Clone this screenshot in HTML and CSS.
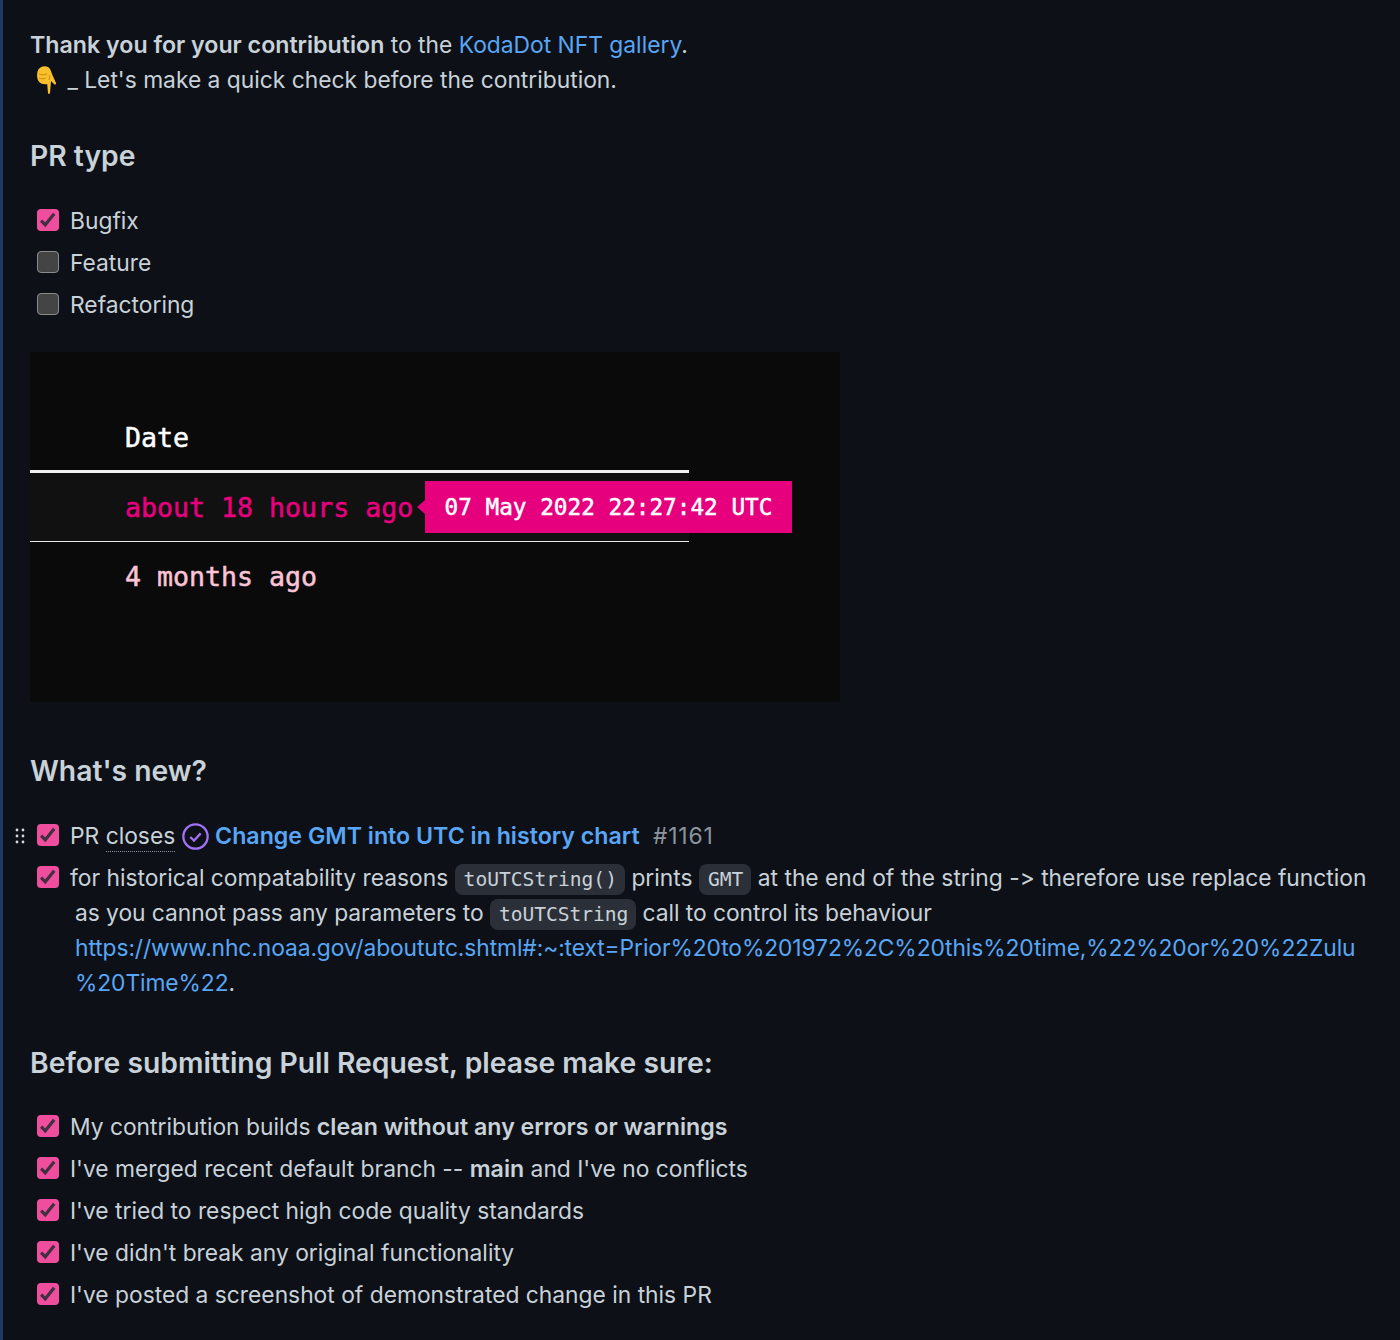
FILE: index.html
```html
<!DOCTYPE html>
<html lang="en">
<head>
  <meta charset="UTF-8" />
  <title>Pull request description</title>
  <link rel="stylesheet" href="styles.css">
</head>
<body>
  <div id="comment">
    <p class="intro"><b>Thank you for your contribution</b> to the <a href="#">KodaDot NFT gallery</a>.<br>
      <svg class="emoji" viewBox="0 0 24 30" width="24" height="30">
        <path d="M3 5c2-3 6-5 10-3 2 1 3 4 4 7l4 9c.5 1.5-1 2-2 1l-3-3-1 12c-.2 1.2-1.8 1.2-2 0l-.8-9c-3 .5-6 0-8-2-2-2-3-8-1-12z" fill="#f9c02c"/>
        <path d="M4 9c2 1 5 1 8 0M4 13c2 1 5 1 7 0M14 15l1-5" stroke="#c98a12" stroke-width="1" fill="none"/>
      </svg> _ Let's make a quick check before the contribution.</p>

    <h2 class="first-heading">PR type</h2>
    <ul class="tasks">
      <li><span class="check on"><svg viewBox="0 0 16 16"><path d="M3 8.5l3 3 6.5-8"/></svg></span>Bugfix</li>
      <li><span class="check"></span>Feature</li>
      <li><span class="check"></span>Refactoring</li>
    </ul>

    <div id="shot">
      <div class="date-head">Date</div>
      <div class="date-row active">about 18 hours ago
        <span class="tip">07 May 2022 22:27:42 UTC</span>
      </div>
      <div class="date-row old">4 months ago</div>
    </div>

    <h2 class="new-heading">What's new?</h2>
    <ul class="tasks new-list">
      <li>
        <span class="drag"><svg viewBox="0 0 10 16" width="10" height="16"><circle cx="2" cy="2" r="1.4"/><circle cx="8" cy="2" r="1.4"/><circle cx="2" cy="8" r="1.4"/><circle cx="8" cy="8" r="1.4"/><circle cx="2" cy="14" r="1.4"/><circle cx="8" cy="14" r="1.4"/></svg></span>
        <span class="check on"><svg viewBox="0 0 16 16"><path d="M3 8.5l3 3 6.5-8"/></svg></span>PR <span class="dotted">closes</span>
        <svg class="closed-icon" viewBox="0 0 26 26" width="27" height="27"><circle cx="13" cy="13" r="11.7" /><path d="M8 13.5l3.5 3.5 6.5-7"/></svg>
        <a href="#" class="issue">Change GMT into UTC in history chart</a>
        <span class="num">#1161</span>
      </li>
      <li class="long">
        <span class="check on"><svg viewBox="0 0 16 16"><path d="M3 8.5l3 3 6.5-8"/></svg></span>for historical compatability reasons <code>toUTCString()</code> prints <code>GMT</code> at the end of the string -&gt; therefore use replace function
        <div class="more">as you cannot pass any parameters to <code>toUTCString</code> call to control its behaviour<br>
          <a href="#" class="url">https://www.nhc.noaa.gov/aboututc.shtml#:~:text=Prior%20to%201972%2C%20this%20time,%22%20or%20%22Zulu<br>%20Time%22</a>.</div>
      </li>
    </ul>

    <h2 class="sure-heading">Before submitting Pull Request, please make sure:</h2>
    <ul class="tasks">
      <li><span class="check on"><svg viewBox="0 0 16 16"><path d="M3 8.5l3 3 6.5-8"/></svg></span>My contribution builds&nbsp;<b>clean without any errors or warnings</b></li>
      <li><span class="check on"><svg viewBox="0 0 16 16"><path d="M3 8.5l3 3 6.5-8"/></svg></span>I've merged recent default branch --&nbsp;<b>main</b>&nbsp;and I've no conflicts</li>
      <li><span class="check on"><svg viewBox="0 0 16 16"><path d="M3 8.5l3 3 6.5-8"/></svg></span>I've tried to respect high code quality standards</li>
      <li><span class="check on"><svg viewBox="0 0 16 16"><path d="M3 8.5l3 3 6.5-8"/></svg></span>I've didn't break any original functionality</li>
      <li><span class="check on"><svg viewBox="0 0 16 16"><path d="M3 8.5l3 3 6.5-8"/></svg></span>I've posted a screenshot of demonstrated change in this PR</li>
    </ul>
  </div>
</body>
</html>
```

FILE: styles.css
```css
* {
  box-sizing: border-box;
  margin: 0;
  padding: 0;
}

body {
  font-family: 'Inter', sans-serif;
  font-size: 22.8px;
  line-height: 35px;
  font-variant-ligatures: none;
  font-feature-settings: "calt" 0;
  background: #0d1117;
  color: #c9d1d9;
  height: 1340px;
  overflow: hidden;
}

#comment {
  height: 100%;
  padding: 27px 20px 0 27px;
  border-left: 3px solid #1c3a63;
}

a {
  color: #58a6f5;
  text-decoration: none;
}

b {
  font-size: 23.2px;
  line-height: 1;
  font-weight: 600;
}

.emoji {
  vertical-align: -7px;
  margin-left: 5px;
  margin-right: 2px;
}

h2 {
  font-size: 28.3px;
  line-height: 40px;
  font-weight: 600;
}

.first-heading {
  margin-top: 39px;
}

.tasks {
  list-style: none;
}

.tasks li {
  position: relative;
  min-height: 42px;
  line-height: 42px;
  padding-left: 40px;
  white-space: nowrap;
}

.check {
  position: absolute;
  left: 7px;
  top: 9px;
  width: 22px;
  height: 22px;
  border-radius: 4px;
  border: 1px solid #8b8b8b;
  background: #444;
}

.check.on {
  border: none;
  background: #ef4d9d;
}

.check svg {
  display: block;
  width: 22px;
  height: 22px;
  fill: none;
  stroke: #403040;
  stroke-width: 2.3;
}

.first-heading + .tasks {
  margin-top: 24px;
}

#shot {
  width: 810px;
  height: 350px;
  margin-top: 26px;
  background: #0a0a0a;
  padding-top: 68px;
  font-family: 'DejaVu Sans Mono', monospace;
  font-size: 26.6px;
  color: #fff;
  -webkit-text-stroke: 0.5px currentColor;
}

.date-head {
  width: 659px;
  height: 53px;
  line-height: 36px;
  padding-left: 95px;
  border-bottom: 3px solid #f2f2f2;
}

.date-row {
  position: relative;
  width: 659px;
  height: 69px;
  line-height: 70px;
  padding-left: 95px;
}

.date-row.active {
  color: #e6007e;
  background: #111;
  border-bottom: 1px solid #e8e8e8;
}

.date-row.old {
  line-height: 69px;
  color: #fbc4d6;
}

.tip {
  position: absolute;
  left: 395px;
  top: 8px;
  width: 367px;
  height: 52px;
  line-height: 52px;
  text-align: center;
  background: #e6007e;
  color: #fff;
  font-size: 22.7px;
}

.tip::before {
  content: "";
  position: absolute;
  left: -8px;
  top: 19px;
  border-top: 7px solid transparent;
  border-bottom: 7px solid transparent;
  border-right: 8px solid #e6007e;
}

.new-heading {
  margin-top: 49px;
}

.new-list {
  margin-top: 24px;
}

.drag {
  position: absolute;
  left: -15px;
  top: 13px;
}

.drag svg {
  display: block;
  fill: #d5d9de;
}

.dotted {
  border-bottom: 1px dotted #8b949e;
  padding-bottom: 2px;
}

.closed-icon {
  vertical-align: -6px;
  fill: none;
  stroke: #a371f7;
  stroke-width: 2.2;
}

.issue {
  font-size: 23.2px;
  line-height: 1;
  font-weight: 600;
}

.num {
  color: #8b949e;
  margin-left: 7px;
  letter-spacing: 0.8px;
}

.tasks li.long {
  min-height: 0;
}

.more {
  margin-left: 5px;
  line-height: 35px;
  margin-top: -4px;
  letter-spacing: -0.05px;
}

.url {
  letter-spacing: -0.09px;
}

code {
  font-family: 'DejaVu Sans Mono', monospace;
  font-size: 19.6px;
  line-height: 1;
  padding: 4px 8px 4px 9px;
  border-radius: 8px;
  background: #2b3038;
  color: #c9d1d9;
}

.sure-heading {
  margin-top: 43px;
  margin-bottom: 23px;
}
```
